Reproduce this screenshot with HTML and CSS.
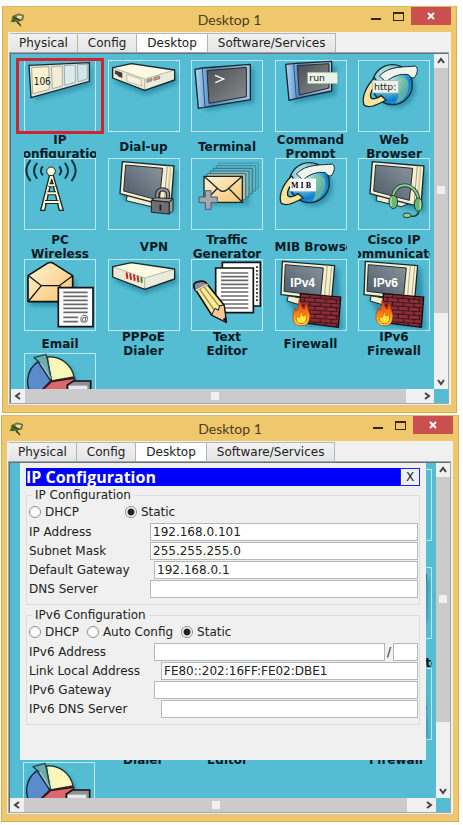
FILE: index.html
```html
<!DOCTYPE html>
<html lang="en">
<head>
  <meta charset="UTF-8" />
  <meta name="viewport" content="width=device-width, initial-scale=1.0" />
  <title>Desktop 1</title>
  <link rel="stylesheet" href="styles.css">
</head>
<body>

<!-- icon sprite, every symbol sits on a 216 grid (3 units per pixel) -->
<svg class="sprite" width="0" height="0" aria-hidden="true">
  <defs>
    <linearGradient id="screen" x1="0" y1="0" x2="1" y2="1">
      <stop offset="0" stop-color="#4c4f52" /><stop offset="1" stop-color="#8a8c90" />
    </linearGradient>
    <linearGradient id="crt" x1="0" y1="1" x2="1" y2="0">
      <stop offset="0" stop-color="#4b5a68" /><stop offset="1" stop-color="#8b959d" />
    </linearGradient>
    <linearGradient id="bluecase" x1="0" y1="0" x2="1" y2="0">
      <stop offset="0" stop-color="#b5d9f2" /><stop offset="0.3" stop-color="#4e88c4" /><stop offset="1" stop-color="#a9c9e0" />
    </linearGradient>
    <radialGradient id="globe" cx="0.35" cy="0.3" r="0.8">
      <stop offset="0" stop-color="#e4f4e4" /><stop offset="0.45" stop-color="#6cc0d4" /><stop offset="0.75" stop-color="#0b7fd0" /><stop offset="1" stop-color="#2a9be0" />
    </radialGradient>
    <linearGradient id="paper" x1="0" y1="0" x2="1" y2="1">
      <stop offset="0" stop-color="#fff3d6" /><stop offset="1" stop-color="#f8c46c" />
    </linearGradient>
    <linearGradient id="flame" x1="0" y1="0" x2="0" y2="1">
      <stop offset="0" stop-color="#e22a10" /><stop offset="0.5" stop-color="#f47a14" /><stop offset="1" stop-color="#ffe83a" />
    </linearGradient>
    <filter id="soft" x="-20%" y="-20%" width="140%" height="140%"><feGaussianBlur stdDeviation="6" /></filter>
    <pattern id="bricks" width="32" height="24" patternUnits="userSpaceOnUse" patternTransform="skewY(4)">
      <rect width="32" height="24" fill="#8c2f38" />
      <path d="M0 1H32M0 13H32M8 1V13M24 13V24" stroke="#2c0c12" stroke-width="3" />
    </pattern>
  </defs>

  <symbol id="i-logo" viewBox="0 0 42 42">
    <path d="M8 10L24 3L41 7L38 21L22 25L6 22Z" fill="#8a9150" stroke="#46431c" stroke-width="2" />
    <path d="M22 8L36 9L33 18L20 16Z" fill="#e5e3bd" />
    <path d="M1 26L12 14L23 17L14 28Z" fill="#3d6b2c" />
    <path d="M10 11L30 22M20 24L33 39M20 24L25 32" stroke="#3a3d15" stroke-width="4" fill="none" />
  </symbol>

  <symbol id="i-ipconfig" viewBox="0 0 216 216">
    <path d="M26 28L204 20V78L34 122Z" fill="#1c7490" opacity="0.5" filter="url(#soft)" />
    <path d="M15 16L196 8V64L21 113Z" fill="#dfe5dd" stroke="#16282e" stroke-width="4" />
    <path d="M23 23L74 20L76 88L26 101Z" fill="#fbf3cf" stroke="#8b8b80" stroke-width="2" />
    <path d="M82 20L115 18V78L85 86Z" fill="#f1ecd2" stroke="#888e8c" stroke-width="2" />
    <path d="M121 17L154 15V67L122 76Z" fill="#dcebed" stroke="#7d8f94" stroke-width="2" />
    <path d="M160 14L190 13V57L162 65Z" fill="#d3e4ee" stroke="#7d8f94" stroke-width="2" />
  </symbol>

  <symbol id="case" viewBox="0 0 216 216">
    <path d="M22 34L110 80L206 40V72L112 106L22 68Z" fill="#1c7490" opacity="0.6" filter="url(#soft)" />
    <path d="M14 23L70 11L200 30L110 57Z" fill="#fdfae2" />
    <path d="M14 23L110 57V91L14 54Z" fill="#f0ead2" />
    <path d="M110 57L200 30V60L110 91Z" fill="#e9ecdd" />
    <path d="M14 23L110 57L200 30M110 57V90" fill="none" stroke="#a5a592" stroke-width="2" />
    <path d="M14 23L70 11L200 30V60L110 91L14 54Z" fill="none" stroke="#16282e" stroke-width="4" stroke-linejoin="round" />
  </symbol>
  <symbol id="i-dialup" viewBox="0 0 216 216">
    <use href="#case" />
    <path d="M21 31L43 38V54L29 49V45L21 42Z" fill="#3e3f40" />
    <path d="M56 43L100 58V78L56 64Z" fill="#f6f2df" stroke="#a7a49a" stroke-width="2" />
    <path d="M117 59L132 55V62L117 67ZM138 53L155 48V56L138 61Z" fill="#c89f88" stroke="#7c6455" stroke-width="2" />
  </symbol>
  <symbol id="i-pppoe" viewBox="0 0 216 216">
    <use href="#case" />
    <path d="M56 43L58 57M67 46L69 60M78 49L80 63M89 53L91 67" stroke="#c1272d" stroke-width="6" stroke-linecap="round" />
    <path d="M100 57L101 69" stroke="#2d8a3e" stroke-width="6" stroke-linecap="round" />
  </symbol>

  <symbol id="i-terminal" viewBox="0 0 216 216">
    <path d="M34 40L190 24V128L42 152Z" fill="#1c7490" opacity="0.6" filter="url(#soft)" />
    <path d="M12 28L34 24L178 13V119L36 143L22 145Z" fill="url(#bluecase)" stroke="#16282e" stroke-width="4" stroke-linejoin="round" />
    <path d="M34 24L42 142" stroke="#2a5686" stroke-width="3" />
    <path d="M48 32L166 22V110L54 130Z" fill="url(#screen)" stroke="#23292e" stroke-width="3" />
    <path d="M72 46L98 57L73 68" fill="none" stroke="#fff" stroke-width="4" />
  </symbol>
  <symbol id="i-command" viewBox="0 0 216 216">
    <path d="M48 26L184 16V106L56 130Z" fill="#1c7490" opacity="0.6" filter="url(#soft)" />
    <path d="M32 13L62 10L170 4V93L66 115L42 121Z" fill="url(#bluecase)" stroke="#16282e" stroke-width="4" stroke-linejoin="round" />
    <path d="M56 12L64 115" stroke="#2a5686" stroke-width="3" />
    <path d="M67 17L162 11V84L73 105Z" fill="url(#screen)" stroke="#23292e" stroke-width="3" />
    <rect x="98" y="37" width="90" height="34" fill="#e9f3e6" stroke="#9fb5b0" stroke-width="2" />
  </symbol>

  <symbol id="planet" viewBox="0 0 216 216">
    <circle cx="114" cy="84" r="60" fill="#1c7490" opacity="0.6" filter="url(#soft)" />
    <circle cx="103" cy="74" r="60" fill="url(#globe)" stroke="#16282e" stroke-width="4" />
    <path d="M112 62C140 42 158 60 150 90C144 112 128 126 112 132C122 108 128 88 112 62Z" fill="#8fd18b" opacity="0.6" />
    <path d="M50 54C24 78 10 112 18 135C30 147 60 134 84 120L70 107C56 116 42 120 38 112C35 98 46 82 60 70Z" fill="#fbe49a" stroke="#16282e" stroke-width="4" stroke-linejoin="round" />
    <path d="M64 48C92 16 142 22 172 18C182 24 179 42 168 54C158 56 156 46 150 44C128 40 104 48 84 66Z" fill="#eef5ea" stroke="#16282e" stroke-width="3" stroke-linejoin="round" />
  </symbol>
  <symbol id="i-browser" viewBox="0 0 216 216">
    <use href="#planet" />
    <rect x="44" y="62" width="78" height="37" fill="#edf3ea" stroke="#a5b5b0" stroke-width="2" />
  </symbol>
  <symbol id="i-mib" viewBox="0 0 216 216">
    <use href="#planet" />
    <rect x="45" y="62" width="78" height="38" fill="#fff" />
  </symbol>

  <symbol id="i-wireless" viewBox="0 0 216 216">
    <path d="M77 50L50 157H62L83 64L106 157H118L87 50ZM72 84H94M67 106H100M62 132H106" fill="#fffbd6" stroke="#1c2421" stroke-width="4" stroke-linejoin="round" />
    <path d="M76 82H90M70 106H96M63 132H103" stroke="#1c2421" stroke-width="12" />
    <path d="M73 82H93M67 106H99M60 132H106" stroke="#fffbd6" stroke-width="6" />
    <circle cx="81" cy="40" r="13" fill="#fffbd6" stroke="#1c2421" stroke-width="3" />
    <g fill="none" stroke="#0b3440" stroke-width="6" stroke-linecap="round">
      <path d="M55 27Q46 38 55 50M38 17Q22 38 38 60M18 8Q-4 38 18 67" />
      <path d="M107 27Q116 38 107 50M124 17Q140 38 124 60M144 8Q166 38 144 67" />
    </g>
  </symbol>

  <symbol id="monitor" viewBox="0 0 216 216">
    <path d="M52 26L206 38L200 164L44 122Z" fill="#1c7490" opacity="0.6" filter="url(#soft)" />
    <path d="M58 112L54 128L130 146L150 138V126Z" fill="#f3edcf" stroke="#16282e" stroke-width="3" stroke-linejoin="round" />
    <path d="M43 11L198 24L189 142L160 140L36 107Z" fill="#f6efd0" stroke="#16282e" stroke-width="4" stroke-linejoin="round" />
    <path d="M178 23L168 139" stroke="#a89f7c" stroke-width="3" />
    <path d="M188 24L178 140" stroke="#d6cca2" stroke-width="6" />
    <path d="M53 21L164 31L154 127L47 99Z" fill="url(#crt)" stroke="#222c32" stroke-width="3" />
  </symbol>
  <symbol id="i-vpn" viewBox="0 0 216 216">
    <use href="#monitor" />
    <path d="M148 126V108Q150 94 164 94Q179 94 180 108V124" fill="none" stroke="#222" stroke-width="13" />
    <path d="M148 126V108Q150 94 164 94Q179 94 180 108V124" fill="none" stroke="#8d8f92" stroke-width="7" />
    <path d="M130 127L184 132V168L130 163Z" fill="#6d6f73" stroke="#222" stroke-width="3" />
    <path d="M184 132L195 122V158L184 168ZM130 127L142 119L195 122L184 132Z" fill="#9a9ca0" stroke="#222" stroke-width="3" stroke-linejoin="round" />
    <path d="M157 142V156" stroke="#1b1b1b" stroke-width="5" stroke-linecap="round" />
  </symbol>
  <symbol id="i-communicator" viewBox="0 0 216 216">
    <use href="#monitor" />
    <path d="M105 124C102 68 178 66 182 130" fill="none" stroke="#1d4030" stroke-width="11" />
    <path d="M105 124C102 68 178 66 182 130" fill="none" stroke="#96cc93" stroke-width="6" />
    <ellipse cx="106" cy="132" rx="13" ry="20" fill="#6db573" stroke="#1d4030" stroke-width="3" />
    <ellipse cx="181" cy="140" rx="12" ry="20" fill="#6db573" stroke="#1d4030" stroke-width="3" />
    <path d="M99 118V145M187 126V154" stroke="#b4dfaa" stroke-width="4" />
    <path d="M182 160C182 174 166 176 156 174" fill="none" stroke="#1d4030" stroke-width="5" />
    <ellipse cx="147" cy="172" rx="12" ry="7" fill="#96cc93" stroke="#1d4030" stroke-width="3" />
  </symbol>

  <symbol id="i-traffic" viewBox="0 0 216 216">
    <path d="M50 66H174V142H50Z" fill="#1c7490" opacity="0.5" filter="url(#soft)" />
    <g fill="#62b3c4" stroke="#2b7488" stroke-width="3">
      <path d="M84 15H202V92H84Z" opacity="0.5" /><path d="M76 23H194V100H76Z" opacity="0.7" />
      <path d="M67 31H184V108H67Z" /><path d="M58 39H174V117H58Z" fill="#83b3b4" /><path d="M48 47H164V125H48Z" fill="#b8bda5" />
    </g>
    <path d="M39 55H154V133H39Z" fill="url(#paper)" stroke="#16282e" stroke-width="4" />
    <path d="M39 133L80 90M154 133L112 90M39 55L84 95Q96 105 108 95L154 55" fill="none" stroke="#16282e" stroke-width="4" />
    <path d="M43 98H60V117H79V134H60V154H43V134H24V117H43Z" fill="#a5a7ae" stroke="#4f5b66" stroke-width="3" />
  </symbol>

  <symbol id="i-email" viewBox="0 0 216 216">
    <path d="M20 60H156V142H20Z" fill="#1c7490" opacity="0.6" filter="url(#soft)" />
    <path d="M12 50L70 13Q79 8 88 13L146 50V128H12Z" fill="url(#paper)" stroke="#111" stroke-width="5" stroke-linejoin="round" />
    <path d="M14 50L52 80H106L146 50M52 80L14 126M106 80L146 126" fill="none" stroke="#111" stroke-width="4" />
    <path d="M103 86H207V203H103Z" fill="#fff" stroke="#111" stroke-width="5" />
    <path d="M118 100H191M118 112H191M118 124H191M118 136H191M118 148H191M118 160H191M118 175H162M118 188H162" stroke="#6a6a6a" stroke-width="5" />
  </symbol>

  <symbol id="i-editor" viewBox="0 0 216 216">
    <path d="M94 10H208V141H94Z" fill="#fff" stroke="#111" stroke-width="5" />
    <path d="M198 22V132" stroke="#111" stroke-width="5" stroke-dasharray="5 6" />
    <path d="M74 27H187V161H74Z" fill="#fff" stroke="#111" stroke-width="5" />
    <path d="M90 42H172M90 53H172M90 64H172M90 76H172M90 87H172M90 99H172M90 111H172M90 123H172M90 135H172M102 147H172" stroke="#6a6a6a" stroke-width="5" />
    <path d="M13 91L48 75L99 138L106 190L62 168Z" fill="#fbeb9c" stroke="#111" stroke-width="5" stroke-linejoin="round" />
    <path d="M25 89L73 158M38 82L88 146" stroke="#a48a3a" stroke-width="4" />
    <path d="M62 168L72 148L82 154L86 140L99 138L106 190Z" fill="#f7c79a" stroke="#111" stroke-width="3" stroke-linejoin="round" />
    <path d="M95 180L104 175L107 192Z" fill="#111" />
    <path d="M13 94Q0 72 22 68Q42 62 49 77Z" fill="#8f8a92" stroke="#111" stroke-width="5" />
    <path d="M14 94L50 76" stroke="#ddd" stroke-width="5" />
  </symbol>

  <symbol id="i-firewall" viewBox="0 0 216 216">
    <path d="M84 34L190 28L196 120L204 212L84 200L34 122Z" fill="#1c7490" opacity="0.6" filter="url(#soft)" />
    <path d="M40 110L36 126L90 142V120Z" fill="#f3edcf" stroke="#16282e" stroke-width="3" />
    <path d="M22 7L179 20L170 124L18 107Z" fill="#f6efd0" stroke="#16282e" stroke-width="4" stroke-linejoin="round" />
    <path d="M157 20L149 108M170 22L162 108" stroke="#b3a980" stroke-width="3" />
    <path d="M31 17L145 27L137 110L27 97Z" fill="url(#crt)" stroke="#222c32" stroke-width="3" />
    <path d="M76 104L197 114L190 205L76 190Z" fill="url(#bricks)" stroke="#1c0a0e" stroke-width="4" />
    <path d="M72 122C82 136 78 146 88 150C88 140 92 136 96 130C94 150 108 158 104 178C102 194 92 201 78 200C62 200 54 190 54 176C52 164 58 158 60 148C62 156 66 156 68 150C72 142 70 134 72 122Z" fill="url(#flame)" stroke="#b02a10" stroke-width="2" />
    <path d="M78 154C84 164 80 170 86 172L92 164C98 180 94 194 80 194C66 194 60 184 66 170L72 176C76 170 76 164 78 154Z" fill="#ffe53a" stroke="#e8581a" stroke-width="3" />
  </symbol>

  <symbol id="i-pie" viewBox="0 0 216 216">
    <circle cx="84" cy="92" r="74" fill="#1c7490" opacity="0.6" filter="url(#soft)" />
    <path d="M80 84L42 26A72 72 0 0 0 30 134Z" fill="#5a8ccc" stroke="#16213c" stroke-width="4" />
    <path d="M82 84L70 12A74 74 0 0 1 150 72Z" fill="#fbf7b8" stroke="#16282e" stroke-width="4" />
    <path d="M82 86L152 76A72 72 0 0 1 30 136Z" fill="#d9696c" stroke="#3c1216" stroke-width="4" />
    <path d="M82 80L46 28L30 14L66 4L70 20Z" fill="#6fabab" stroke="#1f4a4c" stroke-width="4" stroke-linejoin="round" />
    <path d="M50 30L80 76M76 22L86 72" stroke="#d9efe2" stroke-width="4" opacity="0.7" />
    <path d="M148 84H200V150H130V96Z" fill="#8f9294" stroke="#111" stroke-width="5" />
    <path d="M134 98H190V150H134Z" fill="#e8e8ea" />
  </symbol>
</svg>

<main>
  <section class="window" aria-label="Desktop applications">
    <header class="titlebar">
      <svg class="logo"><use href="#i-logo" /></svg>
      <h1>Desktop 1</h1>
      <div class="controls">
        <button class="min" aria-label="Minimize"></button>
        <button class="max" aria-label="Maximize"></button>
        <button class="close" aria-label="Close"><svg viewBox="0 0 8 8"><path d="M1 1L7 7M7 1L1 7" /></svg></button>
      </div>
    </header>
    <div class="frame">
      <nav class="tabs">
        <button>Physical</button><button>Config</button><button class="active">Desktop</button><button>Software/Services</button>
      </nav>
      <div class="pane">
        <div class="view">
          <div class="apps">
            <button class="app"><span class="tile marked"><svg viewBox="0 0 216 216"><use href="#i-ipconfig" /><text x="29" y="76" class="t-narrow">106</text></svg></span><span class="name"><b>IP</b><b>Configuration</b></span></button>
            <button class="app"><span class="tile"><svg viewBox="0 0 216 216"><use href="#i-dialup" /></svg></span><span class="name"><b>Dial-up</b></span></button>
            <button class="app"><span class="tile"><svg viewBox="0 0 216 216"><use href="#i-terminal" /></svg></span><span class="name"><b>Terminal</b></span></button>
            <button class="app"><span class="tile"><svg viewBox="0 0 216 216"><use href="#i-command" /><text x="103" y="63" class="t-sans">run</text></svg></span><span class="name"><b>Command</b><b>Prompt</b></span></button>
            <button class="app"><span class="tile"><svg viewBox="0 0 216 216"><use href="#i-browser" /><text x="48" y="89" class="t-sans">http:</text></svg></span><span class="name"><b>Web</b><b>Browser</b></span></button>
            <button class="app"><span class="tile"><svg viewBox="0 0 216 216"><use href="#i-wireless" /></svg></span><span class="name"><b>PC</b><b>Wireless</b></span></button>
            <button class="app"><span class="tile"><svg viewBox="0 0 216 216"><use href="#i-vpn" /></svg></span><span class="name"><b>&nbsp;&nbsp;&nbsp;&nbsp;&nbsp;VPN</b></span></button>
            <button class="app"><span class="tile"><svg viewBox="0 0 216 216"><use href="#i-traffic" /></svg></span><span class="name"><b>Traffic</b><b>Generator</b></span></button>
            <button class="app"><span class="tile"><svg viewBox="0 0 216 216"><use href="#i-mib" /><text x="48" y="89" class="t-serif">M I B</text></svg></span><span class="name start"><b>MIB Browser</b></span></button>
            <button class="app"><span class="tile"><svg viewBox="0 0 216 216"><use href="#i-communicator" /></svg></span><span class="name"><b>Cisco IP</b><b>Communicator</b></span></button>
            <button class="app"><span class="tile"><svg viewBox="0 0 216 216"><use href="#i-email" /><text x="167" y="190" class="t-at">@</text></svg></span><span class="name"><b>Email</b></span></button>
            <button class="app"><span class="tile"><svg viewBox="0 0 216 216"><use href="#i-pppoe" /></svg></span><span class="name"><b>PPPoE</b><b>Dialer</b></span></button>
            <button class="app"><span class="tile"><svg viewBox="0 0 216 216"><use href="#i-editor" /></svg></span><span class="name"><b>Text</b><b>Editor</b></span></button>
            <button class="app"><span class="tile"><svg viewBox="0 0 216 216"><use href="#i-firewall" /><text x="46" y="84" class="t-ip">IPv4</text></svg></span><span class="name"><b>Firewall</b></span></button>
            <button class="app"><span class="tile"><svg viewBox="0 0 216 216"><use href="#i-firewall" /><text x="46" y="84" class="t-ip">IPv6</text></svg></span><span class="name"><b>IPv6</b><b>Firewall</b></span></button>
            <button class="app" aria-label="Traffic reports"><span class="tile"><svg viewBox="0 0 216 216"><use href="#i-pie" /></svg></span></button>
          </div>
        </div>
        <div class="vscroll">
          <button aria-label="Scroll up"><svg viewBox="0 0 8 8"><path d="M1 6L4 2L7 6" /></svg></button>
          <div class="thumb"><i></i></div>
          <button aria-label="Scroll down"><svg viewBox="0 0 8 8"><path d="M1 2L4 6L7 2" /></svg></button>
        </div>
        <div class="hscroll">
          <button aria-label="Scroll left"><svg viewBox="0 0 8 8"><path d="M6 1L2 4L6 7" /></svg></button>
          <div class="thumb"><i></i></div>
          <button aria-label="Scroll right"><svg viewBox="0 0 8 8"><path d="M2 1L6 4L2 7" /></svg></button>
        </div>
        <div class="corner"></div>
      </div>
    </div>
  </section>

  <section class="window second" aria-label="IP Configuration">
    <header class="titlebar">
      <svg class="logo"><use href="#i-logo" /></svg>
      <h1>Desktop 1</h1>
      <div class="controls">
        <button class="min" aria-label="Minimize"></button>
        <button class="max" aria-label="Maximize"></button>
        <button class="close" aria-label="Close"><svg viewBox="0 0 8 8"><path d="M1 1L7 7M7 1L1 7" /></svg></button>
      </div>
    </header>
    <div class="frame">
      <nav class="tabs">
        <button>Physical</button><button>Config</button><button class="active">Desktop</button><button>Software/Services</button>
      </nav>
      <div class="pane">
        <div class="view">
          <div class="apps">
            <button class="app"><span class="tile"><svg><use href="#i-ipconfig" /></svg></span></button>
            <button class="app"><span class="tile"><svg><use href="#i-dialup" /></svg></span></button>
            <button class="app"><span class="tile"><svg><use href="#i-terminal" /></svg></span></button>
            <button class="app"><span class="tile"><svg><use href="#i-command" /></svg></span></button>
            <button class="app"><span class="tile"><svg><use href="#i-browser" /></svg></span></button>
            <button class="app"><span class="tile"><svg><use href="#i-wireless" /></svg></span></button>
            <button class="app"><span class="tile"><svg><use href="#i-vpn" /></svg></span></button>
            <button class="app"><span class="tile"><svg><use href="#i-traffic" /></svg></span></button>
            <button class="app"><span class="tile"><svg><use href="#i-mib" /></svg></span></button>
            <button class="app"><span class="tile"><svg><use href="#i-communicator" /></svg></span><span class="name"><b>Cisco IP</b><b>Communicator</b></span></button>
            <button class="app"><span class="tile"><svg><use href="#i-email" /></svg></span></button>
            <button class="app"><span class="tile"><svg><use href="#i-pppoe" /></svg></span><span class="name"><b>PPPoE</b><b>Dialer</b></span></button>
            <button class="app"><span class="tile"><svg><use href="#i-editor" /></svg></span><span class="name"><b>Text</b><b>Editor</b></span></button>
            <button class="app"><span class="tile"><svg><use href="#i-firewall" /></svg></span></button>
            <button class="app"><span class="tile"><svg><use href="#i-firewall" /></svg></span><span class="name"><b>IPv6</b><b>Firewall</b></span></button>
            <button class="app" aria-label="Traffic reports"><span class="tile"><svg><use href="#i-pie" /></svg></span></button>
          </div>

          <form class="dialog">
            <div class="dialog-title">
              <h2>IP Configuration</h2>
              <button type="button">X</button>
            </div>
            <fieldset>
              <legend>IP Configuration</legend>
              <div class="radios wide">
                <label><input type="radio" name="ip4"> DHCP</label>
                <label><input type="radio" name="ip4" checked> Static</label>
              </div>
              <div class="field"><label for="ip">IP Address</label><input id="ip" type="text" value="192.168.0.101"></div>
              <div class="field"><label for="mask">Subnet Mask</label><input id="mask" type="text" value="255.255.255.0"></div>
              <div class="field mid"><label for="gw">Default Gateway</label><input id="gw" type="text" value="192.168.0.1"></div>
              <div class="field"><label for="dns">DNS Server</label><input id="dns" type="text"></div>
            </fieldset>
            <fieldset>
              <legend>IPv6 Configuration</legend>
              <div class="radios">
                <label><input type="radio" name="ip6"> DHCP</label>
                <label><input type="radio" name="ip6"> Auto Config</label>
                <label><input type="radio" name="ip6" checked> Static</label>
              </div>
              <div class="field mid"><label for="ip6">IPv6 Address</label><input id="ip6" type="text"><span>/</span><input class="prefix" type="text" aria-label="Prefix length"></div>
              <div class="field far"><label for="link">Link Local Address</label><input id="link" type="text" value="FE80::202:16FF:FE02:DBE1"></div>
              <div class="field mid"><label for="gw6">IPv6 Gateway</label><input id="gw6" type="text"></div>
              <div class="field far"><label for="dns6">IPv6 DNS Server</label><input id="dns6" type="text"></div>
            </fieldset>
          </form>
        </div>
        <div class="vscroll">
          <button aria-label="Scroll up"><svg viewBox="0 0 8 8"><path d="M1 6L4 2L7 6" /></svg></button>
          <div class="thumb"><i></i></div>
          <button aria-label="Scroll down"><svg viewBox="0 0 8 8"><path d="M1 2L4 6L7 2" /></svg></button>
        </div>
        <div class="hscroll">
          <button aria-label="Scroll left"><svg viewBox="0 0 8 8"><path d="M6 1L2 4L6 7" /></svg></button>
          <div class="thumb"><i></i></div>
          <button aria-label="Scroll right"><svg viewBox="0 0 8 8"><path d="M2 1L6 4L2 7" /></svg></button>
        </div>
        <div class="corner"></div>
      </div>
    </div>
  </section>
</main>
</body>
</html>
```
FILE: styles.css
```css
* {
  box-sizing: border-box;
}
body {
  margin: 0;
  background: #fff;
  color: #222;
  font-family: "DejaVu Sans", Verdana, sans-serif;
  font-size: 12px;
  line-height: 14px;
}
button, input {
  font: inherit;
  color: inherit;
  margin: 0;
  padding: 0;
  border: none;
  border-radius: 0;
}
.sprite {
  position: absolute;
}
main {
  padding-top: 6px;
}

/* window chrome */
.window {
  margin: 0 6px 2px 2px;
  padding: 0 5px 6px;
  background: #efc76c;
  border: 1px solid #d3ab55;
  border-top-color: #dfb862;
}
.second {
  margin: 0 4px 0 1px;
}
.titlebar {
  display: grid;
  grid-template-columns: 1fr auto 1fr;
  align-items: center;
  height: 25px;
}
.titlebar h1 {
  margin: 0;
  font: 14px/20px Lato, "Segoe UI", sans-serif;
  color: #4c3d1c;
}
.logo {
  width: 14px;
  height: 14px;
  margin-left: 2px;
}
.controls {
  display: flex;
  justify-content: flex-end;
  align-self: start;
  gap: 12px;
}
.controls button {
  background: none;
}
.controls .min {
  width: 10px;
  height: 13px;
  border-bottom: 2px solid #33270c;
}
.controls .max {
  width: 11px;
  height: 9px;
  margin-top: 5px;
  border: 1px solid #33270c;
  border-top-width: 2px;
}
.controls .close {
  width: 40px;
  height: 18px;
  margin-left: -5px;
  background: #c9504f;
}
.close svg {
  display: block;
  width: 8px;
  height: 8px;
  margin: auto;
}
.close path {
  stroke: #fff;
  stroke-width: 2;
}
.frame {
  padding: 1px 2px 1px 1px;
  background: #f0f0f0;
  border-bottom: 1px solid #d9c28c;
}

/* tabs */
.tabs {
  display: flex;
  height: 19px;
  padding-left: 1px;
}
.tabs button {
  padding: 0 9px;
  background: linear-gradient(#f2f2f2, #e4e4e4);
  border: 1px solid #b4b4b4;
  border-width: 1px 1px 0 0;
}
.tabs button + button {
  padding: 0 10px;
}
.tabs .active {
  background: #fff;
}

/* scroll area */
.pane {
  display: grid;
  grid-template-columns: 1fr 14px;
  grid-template-rows: 335px 14px;
  border: 1px solid #a5a5a5;
  box-shadow: inset 1px 1px #5f7378;
  padding: 1px 0 0 1px;
}
.view {
  position: relative;
  overflow: hidden;
  background: #54bdd4;
}
.apps {
  display: grid;
  grid-template-columns: repeat(5, 72px);
  grid-template-rows: 98px 101px 94px 98px;
  justify-content: space-between;
  padding: 6px 4px 0 13px;
}
.app {
  display: flex;
  flex-direction: column;
  background: none;
  color: #04191f;
}
.tile {
  position: relative;
  flex: none;
  width: 72px;
  height: 72px;
  background: #54bdd4;
  box-shadow: inset 0 0 0 1px #bdeaf0;
}
.tile svg {
  display: block;
  width: 72px;
  height: 72px;
}
.marked::after {
  content: "";
  position: absolute;
  inset: -2px -8px;
  border: 3px solid #cf2430;
}
.name {
  display: flex;
  flex: 1;
  flex-direction: column;
  align-items: center;
  justify-content: center;
  width: 72px;
  min-height: 0;
  padding-top: 4px;
  overflow-x: clip;
  overflow-y: visible;
  white-space: nowrap;
}
.start {
  align-items: flex-start;
}
.t-narrow {
  font: 30px "Liberation Sans Narrow", "DejaVu Sans Condensed", sans-serif;
  fill: #222;
}
.t-sans {
  font: 28px "DejaVu Sans", sans-serif;
  fill: #222;
}
.t-serif {
  font: bold 24px "Liberation Serif", serif;
  fill: #000;
}
.t-ip {
  font: bold 36px "Liberation Sans", Arial, sans-serif;
  fill: #fff;
}
.t-at {
  font: 26px "Liberation Sans", Arial, sans-serif;
  fill: #222;
}

.vscroll, .hscroll {
  display: flex;
  background: #f0f0f0;
}
.vscroll {
  flex-direction: column;
}
.vscroll button, .hscroll button {
  flex: none;
  display: flex;
  align-items: center;
  justify-content: center;
  width: 14px;
  height: 14px;
  background: #f0f0f0;
}
.vscroll svg, .hscroll svg {
  width: 8px;
  height: 8px;
}
.vscroll path, .hscroll path {
  fill: none;
  stroke: #444;
  stroke-width: 2;
}
.thumb {
  display: flex;
  align-items: center;
  justify-content: center;
  background: #cbcbcb;
}
.thumb i {
  width: 8px;
  height: 8px;
  background: #f0f0f0;
}
.vscroll .thumb {
  height: 73%;
  margin-bottom: auto;
}
.hscroll .thumb {
  width: 90%;
  margin-right: auto;
}
.corner {
  background: #54bdd4;
}

/* ip configuration dialog, lies over the icons */
.dialog {
  position: absolute;
  top: 0;
  left: 10px;
  right: 10px;
  padding: 5px 6px 35px;
  background: #f0f0f0;
}
.dialog-title {
  display: flex;
  justify-content: space-between;
  height: 18px;
  margin-bottom: 2px;
  background: #0000fe;
}
.dialog-title h2 {
  margin: 0;
  font: bold 16px/18px "Open Sans", "Segoe UI", sans-serif;
  color: #fff;
}
.dialog-title button {
  width: 20px;
  border: 1px solid #2222d8;
  background: #eef0f8;
}
fieldset {
  min-width: 0;
  margin: 0 0 3px;
  padding: 1px 1px 5px 2px;
  border: 1px solid #dcdfe2;
}
fieldset:last-child {
  margin-bottom: 0;
}
legend {
  margin-left: 3px;
  padding: 0 3px;
}
.radios {
  display: flex;
  gap: 8px;
  height: 18px;
  margin-bottom: 2px;
}
.radios.wide {
  gap: 46px;
}
.radios label {
  display: flex;
  align-items: center;
  gap: 4px;
}
.radios input {
  appearance: none;
  width: 12px;
  height: 12px;
  border: 1px solid #8a8a8a;
  border-radius: 50%;
  background: #fff;
}
.radios input:checked {
  background: radial-gradient(circle, #222 0 3px, #fff 4px);
}
.field {
  display: flex;
  align-items: center;
  height: 18px;
  margin-bottom: 1px;
}
.field label {
  flex: none;
  width: 121px;
}
.field.mid label {
  width: 125px;
}
.field.far label {
  width: 132px;
}
.field input {
  flex: 1;
  min-width: 0;
  height: 18px;
  padding: 0 2px;
  border: 1px solid #b5b8bb;
  background: #fff;
}
.field span {
  padding: 0 2px;
}
.field .prefix {
  flex: none;
  width: 25px;
}
```
